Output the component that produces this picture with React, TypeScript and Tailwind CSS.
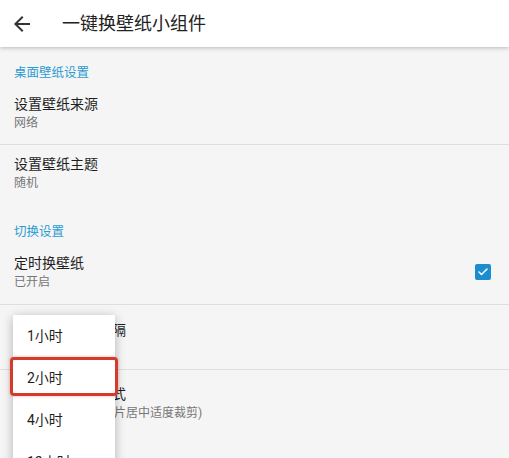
import { Check } from 'lucide-react';

const font = { fontFamily: "Roboto, 'Noto Sans CJK SC', sans-serif" };

type Item = { title: string; sub: string; pad: string; divider?: boolean; checked?: boolean };

const Row = ({ item }: { item: Item }) => (
  <div className={`flex items-center pl-[14px] pr-[18px] ${item.pad} ${item.divider ? 'border-b border-[#dedede]' : ''}`}>
    <div className="flex-1">
      <div className="text-[14px] leading-[20px] text-[#1f1f1f]">{item.title}</div>
      <div className="text-[12px] leading-[18px] text-[#777777]">{item.sub}</div>
    </div>
    {item.checked && (
      <div className="w-4 h-4 rounded-[2px] bg-[#1b8dcc] flex items-center justify-center">
        <Check className="w-[12px] h-[12px] text-white" strokeWidth={3} />
      </div>
    )}
  </div>
);

const App = () => {
  const menu = ['1小时', '2小时', '4小时', '12小时', '24小时'];

  return (
    <div className="relative h-[458px] overflow-hidden bg-[#f5f5f5]" style={font}>
      {/* Toolbar */}
      <div className="relative z-10 h-[47px] bg-white flex items-center shadow-[0_1px_4px_rgba(0,0,0,0.25)]">
        <svg className="ml-[10px] w-6 h-6 text-[#333]" viewBox="0 0 24 24" fill="currentColor">
          <path d="M20 11H7.83l5.59-5.59L12 4l-8 8 8 8 1.41-1.41L7.83 13H20v-2z" />
        </svg>
        <span className="ml-[28px] text-[18px] text-[#222] leading-none">一键换壁纸小组件</span>
      </div>

      {/* Preferences */}
      <div className="pl-[14px] pt-[18px] pb-[5px] text-[12.5px] leading-[16px] text-[#2b9bd1]">桌面壁纸设置</div>
      <Row item={{ title: '设置壁纸来源', sub: '网络', pad: 'pt-[8px] pb-[12px]', divider: true }} />
      <Row item={{ title: '设置壁纸主题', sub: '随机', pad: 'pt-[9px] pb-[13px]' }} />

      <div className="pl-[14px] pt-[19px] pb-[5px] text-[12.5px] leading-[16px] text-[#2b9bd1]">切换设置</div>
      <Row item={{ title: '定时换壁纸', sub: '已开启', pad: 'pt-[8px] pb-[13px]', divider: true, checked: true }} />
      <Row item={{ title: '设置定时切换间隔', sub: '2小时', pad: 'pt-[15px] pb-[11px]', divider: true }} />
      <Row item={{ title: '设置壁纸显示方式', sub: '缩放至屏幕尺寸(图片居中适度裁剪)', pad: 'pt-[14px] pb-[14px]' }} />

      {/* Popup menu */}
      <div className="absolute left-[13px] top-[315px] w-[102px] bg-white shadow-[0_2px_10px_rgba(0,0,0,0.28)] z-20">
        {menu.map((m) => (
          <div key={m} className="h-[42px] flex items-center pl-[14px] text-[14px] text-[#1f1f1f]">
            {m}
          </div>
        ))}
      </div>

      {/* Highlight annotation */}
      <div className="absolute left-[10px] top-[357px] w-[108px] h-[39px] border-[3px] border-[#d33b2c] rounded-[4px] z-30 shadow-[0_0_3px_rgba(211,59,44,0.4)]" />
    </div>
  );
};

export default App;
